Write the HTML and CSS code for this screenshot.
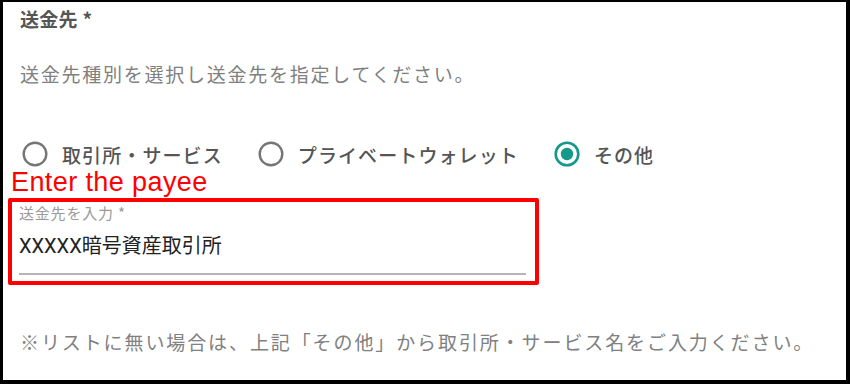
FILE: index.html
```html
<!DOCTYPE html>
<html lang="ja">
<head>
<meta charset="utf-8">
<title>送金先</title>
<link rel="stylesheet" href="styles.css">
</head>
<body>
<div class="panel">
  <div class="title">送金先 *</div>
  <p class="desc">送金先種別を選択し送金先を指定してください。</p>
  <div class="radios">
    <label class="radio">
      <svg class="ico" viewBox="0 0 26 26" width="26" height="26"><circle cx="13" cy="13" r="11.3" fill="none" stroke="#757575" stroke-width="2.4"/></svg>
      <span>取引所・サービス</span>
    </label>
    <label class="radio">
      <svg class="ico" viewBox="0 0 26 26" width="26" height="26"><circle cx="13" cy="13" r="11.3" fill="none" stroke="#757575" stroke-width="2.4"/></svg>
      <span>プライベートウォレット</span>
    </label>
    <label class="radio">
      <svg class="ico" viewBox="0 0 26 26" width="26" height="26"><circle cx="13" cy="13" r="11.3" fill="none" stroke="#16998a" stroke-width="2.6"/><circle cx="13" cy="13" r="6.2" fill="#16998a"/></svg>
      <span>その他</span>
    </label>
  </div>
  <div class="note">Enter the payee</div>
  <div class="box">
    <div class="field-label">送金先を入力 *</div>
    <div class="field-value">XXXXX暗号資産取引所</div>
    <div class="field-line"></div>
  </div>
  <p class="foot">※リストに無い場合は、上記「その他」から取引所・サービス名をご入力ください。</p>
</div>
</body>
</html>
```

FILE: styles.css
```css
html, body {
  margin: 0;
  padding: 0;
  background: #000;
}
body {
  width: 850px;
  height: 384px;
  overflow: hidden;
  font-family: "Noto Sans CJK JP", "Noto Sans", sans-serif;
}
.panel {
  margin: 2px 4px 0 3px;
  height: 378px;
  background: #fff;
  padding: 4px 0 0 17px;
  box-sizing: border-box;
  overflow: hidden;
}
.title {
  font-size: 19px;
  line-height: 26px;
  font-weight: 700;
  color: #555;
  letter-spacing: 0.3px;
}
.desc {
  margin: 29px 0 0;
  font-size: 19px;
  line-height: 26px;
  color: #808080;
  letter-spacing: 1.75px;
}
.radios {
  display: flex;
  align-items: center;
  margin-top: 54px;
  margin-left: 2px;
  height: 26px;
}
.radio {
  display: flex;
  align-items: center;
  gap: 14px;
  margin-right: 35px;
  font-size: 19px;
  font-weight: 500;
  color: #555;
  letter-spacing: 1.1px;
}
.ico { display: block; flex: none; }
.note {
  margin: 0 0 0 -9px;
  font-family: "Liberation Sans", Arial, sans-serif;
  font-size: 27px;
  line-height: 30px;
  color: #ff0000;
  letter-spacing: 0.4px;
}
.box {
  margin: 1px 0 0 -12px;
  width: 531px;
  height: 87px;
  box-sizing: border-box;
  border: 4px solid #ff0000;
  border-radius: 2px;
  padding: 1px 9px 0 7px;
}
.field-label {
  font-size: 15px;
  line-height: 20px;
  color: #9a9a9a;
  letter-spacing: 0.8px;
}
.field-value {
  margin-top: 10px;
  font-family: Roboto, "Noto Sans CJK JP", sans-serif;
  font-size: 20px;
  line-height: 26px;
  color: #222;
}
.field-line {
  margin-top: 14px;
  height: 2px;
  background: #b5b5b5;
}
.foot {
  margin: 44px 0 0;
  font-size: 19px;
  line-height: 26px;
  color: #808080;
  letter-spacing: 1.9px;
  white-space: nowrap;
}
```
